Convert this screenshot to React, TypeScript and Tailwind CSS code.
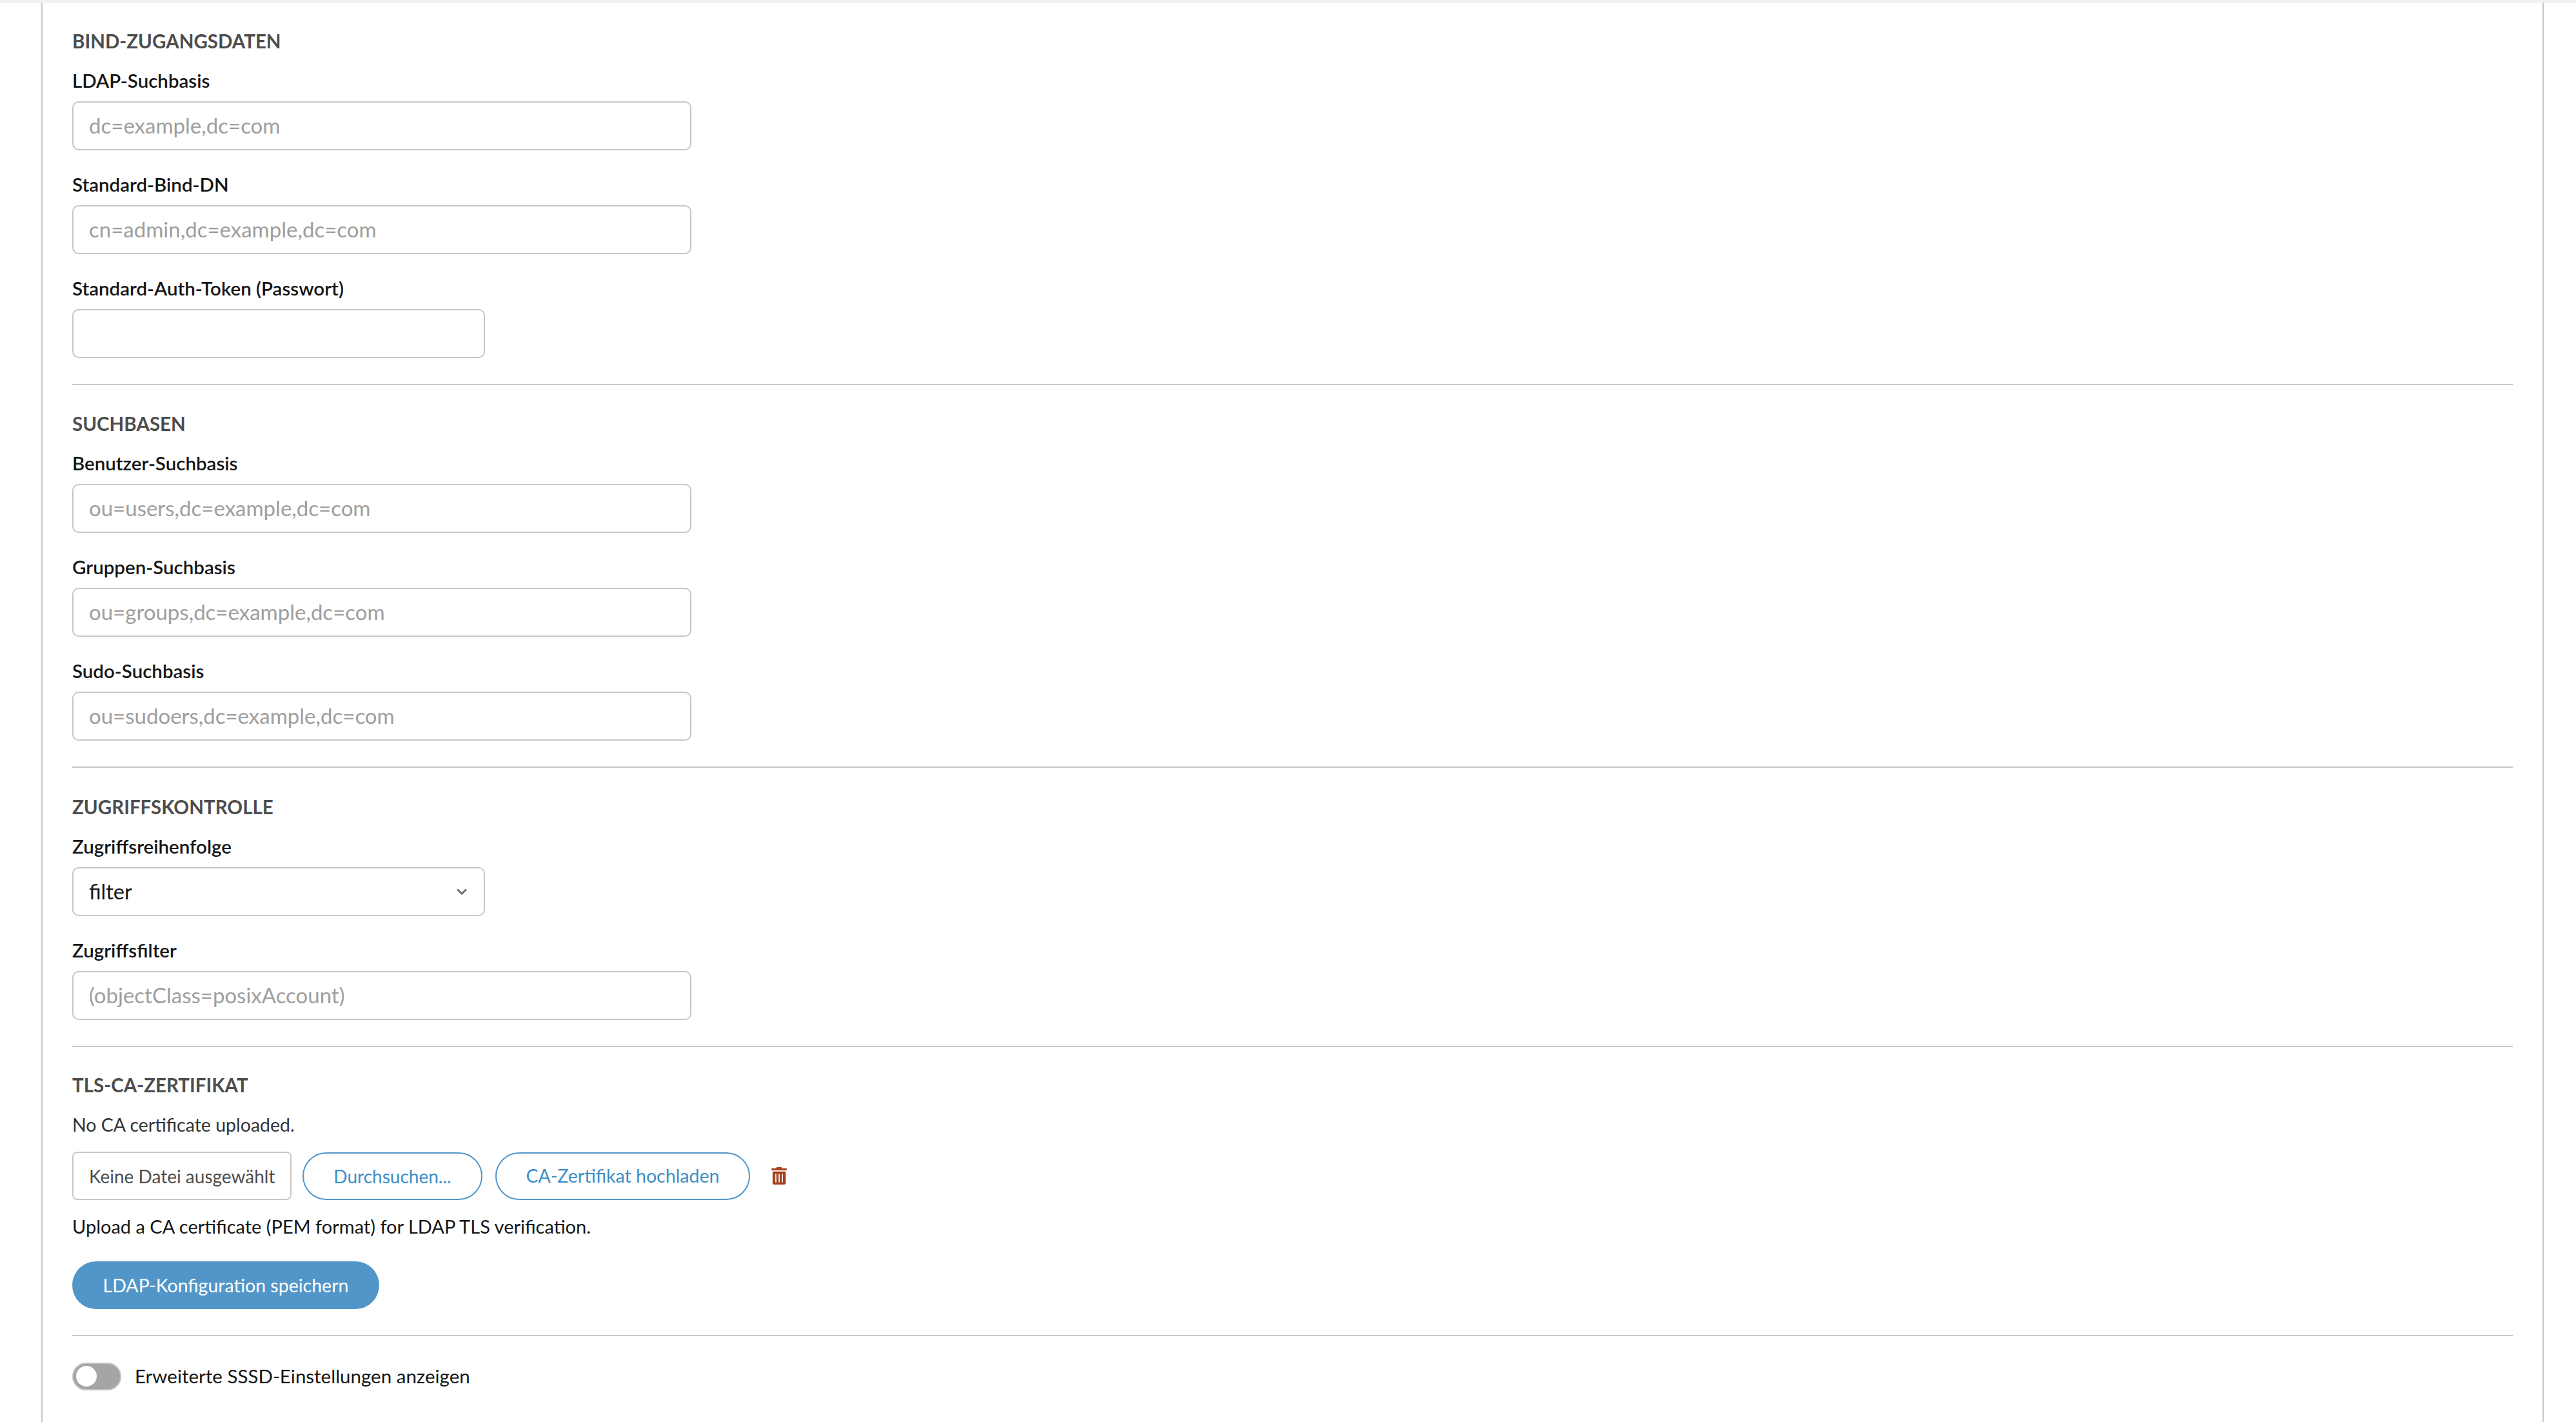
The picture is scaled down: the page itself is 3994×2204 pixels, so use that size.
import type { ReactNode } from "react";
import { FaTrashAlt } from "react-icons/fa";

const FONT = "font-['Lato','Inter',sans-serif]";

type FieldProps = {
  label: string;
  placeholder?: string;
  short?: boolean;
};

function SectionTitle({ children }: { children: ReactNode }) {
  return (
    <h2 className="mb-[25px] h-[36px] text-[29.5px] font-bold uppercase leading-[36px] text-[#4d4d4d]">
      {children}
    </h2>
  );
}

function FieldLabel({ children }: { children: ReactNode }) {
  return (
    <label className="mb-[14px] block h-[36px] text-[29.5px] font-semibold leading-[36px] text-[#151515]">
      {children}
    </label>
  );
}

function Field({ label, placeholder, short }: FieldProps) {
  return (
    <div className="[&:not(:last-child)]:mb-[35px]">
      <FieldLabel>{label}</FieldLabel>
      <input
        type="text"
        readOnly
        placeholder={placeholder}
        className={`block h-[76px] rounded-[10px] border-2 border-[#c7c7c7] bg-white pb-[2px] pl-[24px] pr-[24px] text-[33px] outline-none placeholder:text-[#9e9e9e] ${short ? "w-[640px]" : "w-[960px]"}`}
      />
    </div>
  );
}

function Section({ top = "pt-[42px]", children }: { top?: string; children: ReactNode }) {
  return <section className={`border-b-2 border-[#c7c7c7] pb-[40px] ${top}`}>{children}</section>;
}

export default function App() {
  return (
    <div className={`h-[2204px] w-[3994px] overflow-hidden bg-white pt-[4px] ${FONT}`}>
      <div className="absolute left-0 top-0 h-[4px] w-[3994px] bg-[#f0f0f0]" />
      <div className="ml-[64px] h-[2200px] w-[3880px] border-x-2 border-[#c7c7c7] px-[46px]">
        <Section>
          <SectionTitle>Bind-Zugangsdaten</SectionTitle>
          <Field label="LDAP-Suchbasis" placeholder="dc=example,dc=com" />
          <Field label="Standard-Bind-DN" placeholder="cn=admin,dc=example,dc=com" />
          <Field label="Standard-Auth-Token (Passwort)" short />
        </Section>

        <Section>
          <SectionTitle>Suchbasen</SectionTitle>
          <Field label="Benutzer-Suchbasis" placeholder="ou=users,dc=example,dc=com" />
          <Field label="Gruppen-Suchbasis" placeholder="ou=groups,dc=example,dc=com" />
          <Field label="Sudo-Suchbasis" placeholder="ou=sudoers,dc=example,dc=com" />
        </Section>

        <Section top="pt-[43px]">
          <SectionTitle>Zugriffskontrolle</SectionTitle>
          <div className="mb-[35px]">
            <FieldLabel>Zugriffsreihenfolge</FieldLabel>
            <div className="flex h-[76px] w-[640px] items-center justify-between rounded-[10px] border-2 border-[#c7c7c7] bg-white pl-[24px] pr-[26px] text-[32.5px] text-[#151515]">
              <span>filter</span>
              <svg viewBox="0 0 16 10" className="h-[10px] w-[16px]" fill="none" stroke="#6a6e73" strokeWidth="3">
                <path d="M1 1.5 8 8l7-6.5" />
              </svg>
            </div>
          </div>
          <Field label="Zugriffsfilter" placeholder="(objectClass=posixAccount)" />
        </Section>

        <Section top="pt-[41px]">
          <SectionTitle>TLS-CA-Zertifikat</SectionTitle>
          <p className="mb-[24px] h-[36px] text-[28.5px] leading-[36px] text-[#333333]">
            No CA certificate uploaded.
          </p>
          <div className="mb-[23px] flex h-[75px] items-center">
            <div className="flex h-[75px] w-[340px] items-center rounded-[8px] border-2 border-[#c7c7c7] pl-[24px] text-[28px] text-[#4d4d4d]">
              Keine Datei ausgewählt
            </div>
            <button className="ml-[17px] h-[74px] w-[279px] rounded-full border-2 border-[#5296c9] text-[28px] text-[#3d8ec7]">
              Durchsuchen...
            </button>
            <button className="ml-[20px] h-[74px] w-[395px] rounded-full border-2 border-[#5296c9] text-[28.5px] text-[#3d8ec7]">
              CA-Zertifikat hochladen
            </button>
            <FaTrashAlt className="ml-[33px] h-[27px] w-[24px] text-[#a5401e]" />
          </div>
          <p className="mb-[36px] h-[36px] text-[29px] leading-[36px] text-[#151515]">
            Upload a CA certificate (PEM format) for LDAP TLS verification.
          </p>
          <button className="block h-[74px] w-[476px] rounded-full bg-[#5296c9] text-[28.5px] text-white">
            LDAP-Konfiguration speichern
          </button>
        </Section>

        <div className="flex items-center pt-[40px]">
          <div className="flex h-[43px] w-[76px] items-center rounded-full border-2 border-[#c0c0c0] bg-[#a5a5a5] pl-[4px]">
            <div className="size-[32px] rounded-full bg-white" />
          </div>
          <span className="ml-[21px] text-[29.5px] text-[#151515]">Erweiterte SSSD-Einstellungen anzeigen</span>
        </div>
      </div>
    </div>
  );
}
